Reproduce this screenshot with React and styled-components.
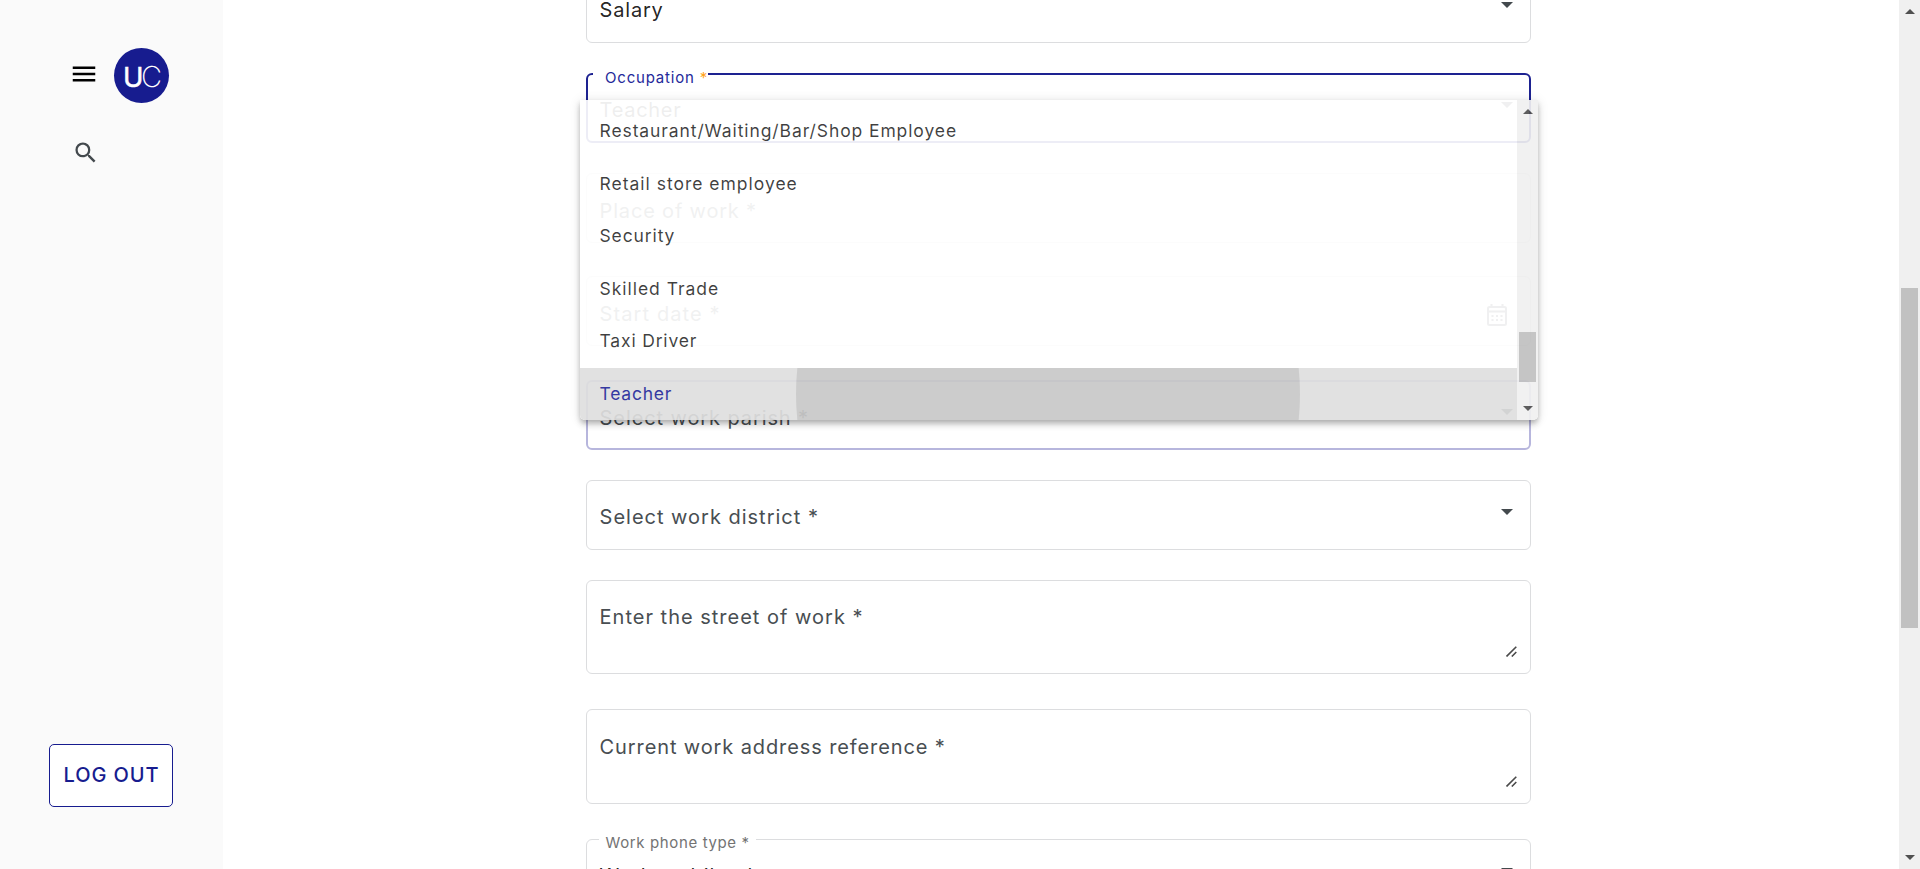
import React from 'react';
import styled, { createGlobalStyle } from 'styled-components';
import { MdMenu, MdSearch } from 'react-icons/md';

const GlobalStyle = createGlobalStyle`
  * { box-sizing: border-box; }
  body {
    margin: 0;
    overflow: hidden;
    background: #fff;
    font-family: Inter, Roboto, "Liberation Sans", sans-serif;
    color: rgba(0, 0, 0, 0.87);
  }
`;

const Page = styled.div`
  display: flex;
  height: 869px;
  overflow: hidden;
`;

const Sidebar = styled.aside`
  display: flex;
  flex-direction: column;
  flex: none;
  width: 223px;
  padding: 48px 0 62px;
  background: #fafafa;
`;

const Brand = styled.div`
  display: flex;
  align-items: center;
  gap: 15px;
  padding-left: 69px;
  height: 55px;
`;

const MenuIcon = styled(MdMenu)`
  width: 30px;
  height: 30px;
  margin-top: -3px;
  color: #000;
`;

const Logo = styled.div`
  display: flex;
  align-items: baseline;
  justify-content: center;
  width: 55px;
  height: 55px;
  padding: 11px 0 0 1px;
  border-radius: 50%;
  background: #171c8f;
  color: #fff;
  line-height: 36px;
`;

const LogoBold = styled.span`
  font-size: 27.5px;
  font-weight: 400;
  letter-spacing: -2.5px;
  -webkit-text-stroke: 0.5px #fff;
`;

const LogoThin = styled.span`
  font-size: 29px;
  font-weight: 200;
  letter-spacing: -1px;
`;

const SearchIcon = styled(MdSearch)`
  width: 27.5px;
  height: 27.5px;
  margin: 36px 0 0 72px;
  color: #43494d;
`;

const LogOut = styled.button`
  align-self: flex-start;
  width: 124px;
  height: 63px;
  margin: auto 0 0 49px;
  padding: 0 0 1px 1px;
  border: 1px solid #171c8f;
  border-radius: 5px;
  background: #fff;
  color: #171c8f;
  font: 500 20px/24px Inter, sans-serif;
  letter-spacing: 0.9px;
`;

const Main = styled.main`
  flex: 1;
  height: 869px;
  overflow: hidden;
`;

const Form = styled.form`
  display: flex;
  flex-direction: column;
  width: 945px;
  margin: -27px 0 0 363px;
`;

const tones = {
  idle: { color: '#dcdddf', width: 1 },
  focused: { color: '#1d2291', width: 2 },
  leaving: { color: '#b7b6dd', width: 2 },
};

const Field = styled.div`
  position: relative;
  display: flex;
  flex: none;
  align-items: flex-start;
  justify-content: space-between;
  height: ${(p) => p.$height || 70}px;
  margin-bottom: ${(p) => p.$gap || 30}px;
  border: ${(p) => `${tones[p.$tone || 'idle'].width}px solid ${tones[p.$tone || 'idle'].color}`};
  border-radius: 6px;
  padding: ${(p) => {
    const w = tones[p.$tone || 'idle'].width;
    return `${(p.$drop || 25) - w}px ${18 - w}px 0 ${13.6 - w}px`;
  }};
`;

const Value = styled.span`
  font-size: 20px;
  line-height: 24px;
  letter-spacing: ${(p) => p.$track || 0.9}px;
  white-space: nowrap;
  color: ${(p) => (p.$hint ? '#484e52' : 'rgba(0, 0, 0, 0.87)')};
`;

const Label = styled.label`
  position: absolute;
  top: -6px;
  left: ${(p) => p.$left}px;
  width: ${(p) => p.$width}px;
  padding-left: ${(p) => p.$inset}px;
  background: #fff;
  font-size: 15px;
  line-height: 18px;
  letter-spacing: ${(p) => p.$track}px;
  white-space: nowrap;
  color: ${(p) => (p.$active ? '#24299a' : '#737373')};
`;

const Required = styled.span`
  color: #ffa41b;
`;

const Caret = styled.i`
  width: 0;
  height: 0;
  margin-top: ${(p) => (p.$raised ? 3 : 4)}px;
  border: 6px solid transparent;
  border-top-color: #43494d;
  border-bottom: 0;
`;

const CalendarIcon = styled.svg`
  width: 20px;
  height: 22px;
  margin: 2px 6px 0 0;
`;

const Grip = styled.svg`
  align-self: flex-end;
  width: 11px;
  height: 11px;
  margin: 0 -4px 16px 0;
`;

const Panel = styled.div`
  position: absolute;
  z-index: 2;
  top: 25px;
  left: -8px;
  display: flex;
  width: 958px;
  height: 320px;
  overflow: hidden;
  border-radius: 0 0 5px 5px;
  background: #fff;
  opacity: 0.92;
`;

const PanelShadow = styled.div`
  position: absolute;
  z-index: 1;
  top: 25px;
  left: -8px;
  width: 958px;
  height: 320px;
  border-radius: 0 0 5px 5px;
  opacity: 0.92;
  box-shadow: 0 2.5px 5px -1px rgba(0, 0, 0, 0.2), 0 5px 6px rgba(0, 0, 0, 0.14),
    0 1px 12px rgba(0, 0, 0, 0.12);
`;

const Options = styled.div`
  display: flex;
  flex: 1;
  flex-direction: column;
  justify-content: flex-end;
`;

const Option = styled.div`
  position: relative;
  display: flex;
  flex: none;
  align-items: center;
  height: ${(p) => (p.$selected ? 52 : 52.5)}px;
  padding: 0 0 1.9px 19.5px;
  overflow: hidden;
  background: ${(p) => (p.$selected ? '#dfdfdf' : 'transparent')};
  color: ${(p) => (p.$selected ? '#24299a' : 'rgba(0, 0, 0, 0.81)')};
  font-size: 17.5px;
  letter-spacing: ${(p) => p.$track || 0.88}px;
  white-space: nowrap;
`;

const Ripple = styled.i`
  position: absolute;
  top: -226px;
  left: 215.5px;
  width: 504px;
  height: 504px;
  border-radius: 50%;
  background: rgba(0, 0, 0, 0.1);
`;

const Track = styled.div`
  display: flex;
  flex: none;
  flex-direction: column;
  align-items: center;
  width: 21px;
  padding: 9px 0;
  background: #f0f0f0;
`;

const TrackArrow = styled.i`
  width: 0;
  height: 0;
  border: 5px solid transparent;
  ${(p) =>
    p.$down
      ? 'border-top: 5px solid #505050; border-bottom: 0; margin-top: auto;'
      : 'border-bottom: 5px solid #505050; border-top: 0;'}
`;

const Thumb = styled.div`
  width: 17px;
  height: ${(p) => p.$length}px;
  margin-top: ${(p) => p.$offset}px;
  background: #c1c1c1;
`;

const options = [
  { text: 'Restaurant/Waiting/Bar/Shop Employee', track: 0.9 },
  { text: 'Retail store employee', track: 0.99 },
  { text: 'Security' },
  { text: 'Skilled Trade', track: 0.97 },
  { text: 'Taxi Driver', track: 0.83 },
  { text: 'Teacher', track: 0.75, selected: true },
];

function Scrollbar({ offset, length }) {
  return (
    <Track>
      <TrackArrow />
      <Thumb $offset={offset} $length={length} />
      <TrackArrow $down />
    </Track>
  );
}

function ResizeGrip() {
  return (
    <Grip viewBox="0 0 11 11" stroke="#4a4a4a" strokeWidth="1.6">
      <path d="M0.5 10.5 10.3 0.7M5.8 10.5 10.3 6" />
    </Grip>
  );
}

function OccupationPanel() {
  return (
    <>
      <PanelShadow />
      <Panel>
        <Options>
          {options.map((o) => (
            <Option key={o.text} $selected={o.selected} $track={o.track}>
              {o.text}
              {o.selected && <Ripple />}
            </Option>
          ))}
        </Options>
        <Scrollbar offset={218} length={50} />
      </Panel>
    </>
  );
}

export default function App() {
  return (
    <Page>
      <GlobalStyle />
      <Sidebar>
        <Brand>
          <MenuIcon />
          <Logo>
            <LogoBold>U</LogoBold>
            <LogoThin>C</LogoThin>
          </Logo>
        </Brand>
        <SearchIcon />
        <LogOut type="button">LOG OUT</LogOut>
      </Sidebar>
      <Main>
        <Form>
          <Field>
            <Value $track={0.8}>Salary</Value>
            <Caret />
          </Field>
          <Field $tone="focused">
            <Label $active $left={5} $width={115} $inset={12} $track={0.8}>
              Occupation <Required>*</Required>
            </Label>
            <Value $track={0.7}>Teacher</Value>
            <Caret />
            <OccupationPanel />
          </Field>
          <Field $gap={33} $drop={26}>
            <Value $hint $track={0.82}>Place of work *</Value>
          </Field>
          <Field $gap={34} $drop={26}>
            <Value $hint $track={1.1}>Start date *</Value>
            <CalendarIcon viewBox="0 0 20 22" fill="none" stroke="#43494d" strokeWidth="2">
              <rect x="1" y="3" width="18" height="18" rx="1.5" />
              <path d="M1 7.5h18M4.5 0v3M15.5 0v3" />
              <path d="M4.5 12h11M4.5 16h11" strokeDasharray="2 2.5" />
            </CalendarIcon>
          </Field>
          <Field $tone="leaving" $drop={26}>
            <Value $hint $track={0.9}>Select work parish *</Value>
            <Caret $raised />
          </Field>
          <Field>
            <Value $hint $track={0.99}>Select work district *</Value>
            <Caret />
          </Field>
          <Field $height={94} $gap={35}>
            <Value $hint $track={1}>Enter the street of work *</Value>
            <ResizeGrip />
          </Field>
          <Field $height={95} $gap={35} $drop={26}>
            <Value $hint $track={0.89}>Current work address reference *</Value>
            <ResizeGrip />
          </Field>
          <Field>
            <Label $left={12} $width={157} $inset={6.5} $track={0.63}>
              Work phone type *
            </Label>
            <Value>Work mobile phone</Value>
            <Caret />
          </Field>
        </Form>
      </Main>
      <Scrollbar offset={274} length={340} />
    </Page>
  );
}
